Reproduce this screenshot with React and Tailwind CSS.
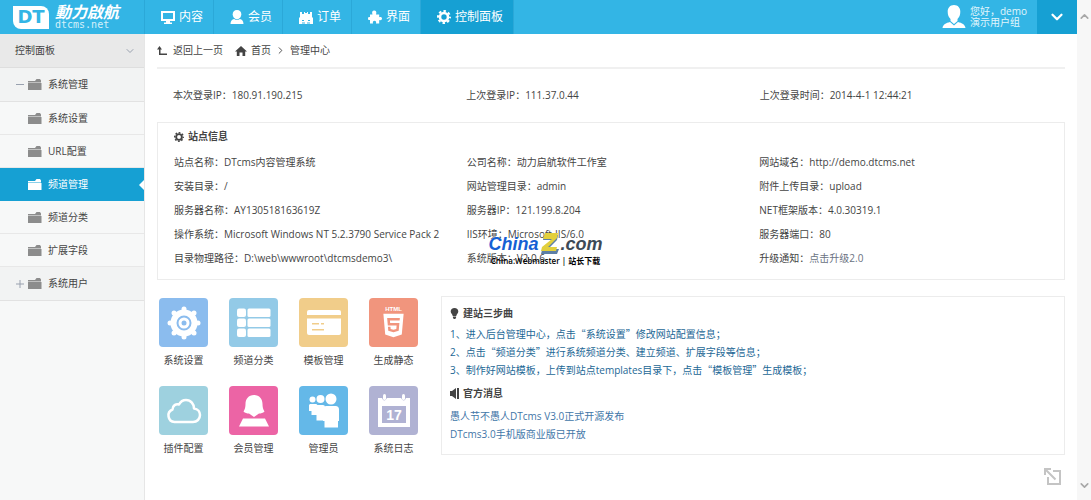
import React, { useState } from "react";
import { ChevronDown, ChevronUp, ChevronRight } from "lucide-react";
import { FaHtml5 } from "react-icons/fa";

const MonitorIcon = () => (
  <svg width="14" height="13" viewBox="0 0 14 13" fill="currentColor">
    <path fillRule="evenodd" d="M0 0h14v10H0zM2 2v6h10V2z" />
    <path d="M5 10h4v1.500h2V13H3v-1.500h2z" />
  </svg>
);

const UserIcon = () => (
  <svg width="14" height="14" viewBox="0 0 14 14" fill="currentColor">
    <path d="M7 0c2.800 0 4.300 1.700 4.300 4.200 0 2.500-1.800 5-4.300 5s-4.300-2.500-4.300-5C2.700 1.700 4.200 0 7 0z" />
    <path d="M.5 14c0-3 1.500-4.500 3.600-5 1.700 1.300 4 1.300 5.800 0 2.100.5 3.600 2 3.600 5z" />
  </svg>
);

const OrderIcon = () => (
  <svg width="14" height="13" viewBox="0 0 14 13" fill="currentColor">
    <path
      fillRule="evenodd"
      d="M1 1h2v2h2V1h1v1h2V1h1v2h2V1h2v5l1 1v6H0V7l1-1zM3 9v1h2V9zm6 0v1h2V9zM3 11.500v1h3v-1zm5 0v1h3v-1z"
    />
  </svg>
);

const PuzzleIcon = () => (
  <svg width="14" height="14" viewBox="0 0 14 14" fill="currentColor">
    <path d="M4.500 4.500C3.500 2 4.500.5 6.200.5S9 2 8 4.500h3.200v2.700c1.500-.8 2.800 0 2.800 1.300s-1.300 2.300-2.800 1.400V13.500H8c.5-2-.2-2.800-1.500-2.800S4.500 11.500 5 13.500H2V9.900C.8 10.500 0 9.700 0 8.500s.8-2 2-1.300V4.500z" />
  </svg>
);

const GearIcon = ({ size }) => (
  <svg width={size} height={size} viewBox="0 0 14 14" fill="none" stroke="currentColor">
    <circle cx="7" cy="7" r="4" strokeWidth="2.600" />
    <circle cx="7" cy="7" r="6" strokeWidth="2" strokeDasharray="2.500 2.212" strokeDashoffset="1.250" />
  </svg>
);

const HomeIcon = () => (
  <svg width="12" height="10" viewBox="0 0 12 10" fill="currentColor">
    <path d="M6 0l6 5.500h-1.800V10H7.500V6.500h-3V10H1.800V5.500H0z" />
  </svg>
);

const Folder = () => (
  <svg width="14" height="11" viewBox="0 0 14 11" fill="currentColor">
    <path d="M0 2h7l1.500-2H12l1 1.500V3H0zM0 4h13.500v7H0z" />
    <path d="M0 2.500h13V9H0z" opacity=".5" />
  </svg>
);

const Avatar = () => (
  <svg width="24" height="24" viewBox="0 0 24 24" fill="white">
    <path d="M12 0c4 0 6.300 2.800 6.300 6.800 0 3-1 5.600-2.800 7.200v2L12 19l-3.500-3v-2C6.700 12.400 5.700 9.800 5.700 6.800 5.700 2.800 8 0 12 0z" />
    <path d="M8 17l4 3.500L16 17c4 1 7 2.500 7.500 6H.5C1 19.500 4 18 8 17z" />
  </svg>
);

const BackIcon = () => (
  <svg width="10" height="10" viewBox="0 0 10 10" fill="currentColor">
    <path d="M2.500 0L5 3.500H3.500V7.500H10V9H2V3.500H0z" />
  </svg>
);

const BulbIcon = () => (
  <svg width="9" height="11" viewBox="0 0 8 11" fill="currentColor">
    <path d="M4 0c2.300 0 3.800 1.500 3.800 3.500C7.800 5.200 6 6 5.800 8H2.200C2 6 .2 5.200.2 3.500.2 1.500 1.700 0 4 0zM2.400 8.600h3.200v1L4.800 11H3.200l-.8-1.400z" />
  </svg>
);

const SpeakerIcon = () => (
  <svg width="9" height="11" viewBox="0 0 9 11" fill="currentColor">
    <path d="M0 3h2l4-3v11L2 8H0zM7 0h2v11H7z" />
  </svg>
);

const GearTile = () => (
  <svg width="34" height="34" viewBox="0 0 34 34" fill="white">
    <circle cx="17" cy="17" r="13.500" />
    <circle cx="17" cy="3" r="2.500" />
    <circle cx="17" cy="31" r="2.500" />
    <circle cx="3" cy="17" r="2.500" />
    <circle cx="31" cy="17" r="2.500" />
    <circle cx="7" cy="7" r="2.500" />
    <circle cx="27" cy="7" r="2.500" />
    <circle cx="7" cy="27" r="2.500" />
    <circle cx="27" cy="27" r="2.500" />
    <circle cx="17" cy="17" r="6.500" fill="none" stroke="#8bbcee" strokeWidth="2" />
    <circle cx="17" cy="17" r="2.500" fill="#8bbcee" />
  </svg>
);

const ListTile = () => (
  <svg width="34" height="30" viewBox="0 0 34 30" fill="white">
    {[0, 10, 20].map((y) => (
      <g key={y}>
        <rect x="0" y={y + 0.5} width="9" height="8.500" rx="2" />
        <rect x="10.500" y={y + 0.5} width="23" height="8.500" rx="1.500" />
      </g>
    ))}
  </svg>
);

const TemplateTile = () => (
  <svg width="34" height="26" viewBox="0 0 34 26" fill="white">
    <path d="M2 0h30q2 0 2 2v3H0V2q0-2 2-2z" />
    <path
      fillRule="evenodd"
      d="M0 8.500h34V23q0 2-2 2H2q-2 0-2-2zM5 13v1.500h7V13zm9 0v1.500h3V13zm-9 6v1.500h12V19z"
    />
  </svg>
);

const HtmlTile = () => (
  <div className="flex flex-col items-center text-white">
    <span className="font-['Liberation_Sans'] text-[6px] leading-[6px] font-bold">HTML</span>
    <FaHtml5 size={27} />
  </div>
);

const CloudTile = () => (
  <svg width="36" height="26" viewBox="0 0 36 26" fill="none" stroke="white" strokeWidth="2.500" strokeLinejoin="round">
    <path d="M8.500 24a6.500 6.500 0 01-2-12.500c0-4 3.500-6 6.500-5C14.500 3.500 17 2 20 2c5 0 8 4 8 8.500 4 .5 6 3.500 6 6.500 0 4-3 7-7 7z" />
  </svg>
);

const MemberTile = () => (
  <svg width="32" height="32" viewBox="0 0 32 32" fill="white">
    <path d="M16 0c5.500 0 8.500 4 8.500 9 0 3 .5 5 2 7.500-1.500 1.500-3.500 2-5.500 2L16 22l-5-3.500c-2 0-4-.5-5.500-2 1.500-2.500 2-4.500 2-7.500 0-5 3-9 8.500-9z" />
    <path d="M5 23.500h22l4 8H1z" />
  </svg>
);

const AdminTile = () => (
  <svg width="30" height="36" viewBox="0 0 30 36" fill="white">
    <circle cx="3.500" cy="6.500" r="3" />
    <circle cx="11.500" cy="6" r="4" />
    <circle cx="22" cy="6" r="5.500" />
    <path d="M1 11h6q1.500 0 1.500 2v9H2.500v-4H0v-6z" />
    <path d="M8 12h6q2 0 2 2v13.500H7.500V22H6v-8q0-2 2-2z" />
    <path d="M17.500 13h9q3.500 0 3.500 3.500V28h-1v6.500H15.500V28H14V16.500q0-3.500 3.500-3.500z" />
  </svg>
);

const CalendarTile = () => (
  <svg width="34" height="34" viewBox="0 0 34 34" fill="white">
    <path fillRule="evenodd" d="M1 4h4q2 5 5 0h14q3 5 5 0h4v29H1zM5 12v17h24V12z" />
    <rect x="6" y="0" width="3" height="6" rx="1.500" />
    <rect x="25" y="0" width="3" height="6" rx="1.500" />
    <text x="17" y="26" textAnchor="middle" fontFamily="Liberation Sans" fontWeight="700" fontSize="14">
      17
    </text>
  </svg>
);

const navItems = [
  { label: "内容", icon: <MonitorIcon /> },
  { label: "会员", icon: <UserIcon /> },
  { label: "订单", icon: <OrderIcon /> },
  { label: "界面", icon: <PuzzleIcon /> },
  { label: "控制面板", icon: <GearIcon size={14} /> },
];

const subMenu = ["系统设置", "URL配置", "频道管理", "频道分类", "扩展字段"];

const siteInfo = [
  ["站点名称：DTcms内容管理系统", "公司名称：动力启航软件工作室", "网站域名：http://demo.dtcms.net"],
  ["安装目录：/", "网站管理目录：admin", "附件上传目录：upload"],
  ["服务器名称：AY130518163619Z", "服务器IP：121.199.8.204", "NET框架版本：4.0.30319.1"],
  ["操作系统：Microsoft Windows NT 5.2.3790 Service Pack 2", "IIS环境：Microsoft-IIS/6.0", "服务器端口：80"],
  ["目录物理路径：D:\\web\\wwwroot\\dtcmsdemo3\\", "系统版本：V2.0.6"],
];

const shortcuts = [
  { label: "系统设置", bg: "bg-[#8bbcee]", icon: <GearTile /> },
  { label: "频道分类", bg: "bg-[#93cae7]", icon: <ListTile /> },
  { label: "模板管理", bg: "bg-[#f1cd8a]", icon: <TemplateTile /> },
  { label: "生成静态", bg: "bg-[#f1957d]", icon: <HtmlTile /> },
  { label: "插件配置", bg: "bg-[#9ed1df]", icon: <CloudTile /> },
  { label: "会员管理", bg: "bg-[#ec64a5]", icon: <MemberTile /> },
  { label: "管理员", bg: "bg-[#64b8e8]", icon: <AdminTile /> },
  { label: "系统日志", bg: "bg-[#b0b2d3]", icon: <CalendarTile /> },
];

// Full-width Chinese quotation marks
const Quoted = ({ children }) => (
  <>
    <span className="font-['Noto_Sans_CJK_SC']">“</span>
    {children}
    <span className="font-['Noto_Sans_CJK_SC']">”</span>
  </>
);

function Header({ active, onSelect }) {
  return (
    <header className="flex h-[34px] bg-[#33b5e5] text-white">
      <a href="#home" className="flex w-[145px] shrink-0 items-center gap-1.5 border-r border-[#2ba8d8] pl-[13px]">
        <span className="flex h-[23px] w-9 items-center justify-center rounded-tr-lg rounded-bl-lg bg-white font-['DejaVu_Sans'] text-lg leading-none font-bold text-[#33b5e5]">
          DT
        </span>
        <span className="flex flex-col whitespace-nowrap">
          <span className="text-base leading-4 font-bold italic">動力啟航</span>
          <span className="font-['DejaVu_Sans_Mono'] text-[10px] leading-[10px] text-[#d5f0fa]">dtcms.net</span>
        </span>
      </a>
      <nav className="flex">
        {navItems.map((item) => (
          <button
            key={item.label}
            type="button"
            onClick={() => onSelect(item.label)}
            className={`flex items-center gap-1 border-r border-[#2ba8d8] pr-2.5 pl-4 text-xs ${
              active === item.label ? "bg-[#16a0d3]" : ""
            }`}
          >
            {item.icon}
            {item.label}
          </button>
        ))}
      </nav>
      <div className="ml-auto flex items-center gap-1 pr-2.5">
        <Avatar />
        <p className="leading-[11px] text-[#e2f5fc]">
          您好，demo
          <br />
          演示用户组
        </p>
      </div>
      <button type="button" aria-label="更多" className="flex w-10 items-center justify-center bg-[#16a0d3]">
        <ChevronDown size={18} strokeWidth={3} />
      </button>
    </header>
  );
}

function Sidebar({ current, onSelect }) {
  return (
    <aside className="w-[145px] shrink-0 border-r border-[#e6e6e6] bg-[#f7f8f8]">
      <button
        type="button"
        className="flex h-[34px] w-full items-center justify-between border-b border-[#dedede] bg-[#e9e9e9] pr-2 pl-[15px]"
      >
        控制面板
        <ChevronDown size={12} className="text-gray-400" />
      </button>
      <button type="button" className="flex h-[34px] w-full items-center border-b border-[#e2e2e2] bg-[#f2f3f3] pl-4">
        <span className="mr-1 h-px w-2 bg-gray-400" />
        <span className="mr-1.5 text-[#8c8c8c]">
          <Folder />
        </span>
        系统管理
      </button>
      <ul>
        {subMenu.map((label) => {
          const selected = label === current;
          return (
            <li key={label}>
              <a
                href="#menu"
                onClick={() => onSelect(label)}
                className={`relative flex h-[33px] items-center gap-1.5 border-b pl-7 ${
                  selected ? "border-[#16a0d3] bg-[#16a0d3] text-white" : "border-[#e8e8e8]"
                }`}
              >
                <span className={selected ? "text-white" : "text-[#8c8c8c]"}>
                  <Folder />
                </span>
                {label}
                {selected && (
                  <svg className="absolute top-3 right-0" width="5" height="10" viewBox="0 0 5 10" fill="white">
                    <path d="M5 0v10L0 5z" />
                  </svg>
                )}
              </a>
            </li>
          );
        })}
      </ul>
      <button type="button" className="flex h-[34px] w-full items-center border-b border-[#e2e2e2] bg-[#f2f3f3] pl-4">
        <svg className="mr-1 text-gray-400" width="8" height="8" viewBox="0 0 8 8" fill="currentColor">
          <path d="M0 3.500h8v1H0zM3.500 0h1v8h-1z" />
        </svg>
        <span className="mr-1.5 text-[#8c8c8c]">
          <Folder />
        </span>
        系统用户
      </button>
    </aside>
  );
}

function SiteInfo() {
  return (
    <section className="border border-[#ececec] pt-0.5 pr-3 pb-[9px] pl-4">
      <h2 className="mb-0.5 flex h-[23px] items-center gap-1 font-bold">
        <GearIcon size={10} />
        站点信息
      </h2>
      <div className="grid grid-cols-3 leading-6">
        {siteInfo.flat().map((text) => (
          <p key={text} className="whitespace-nowrap">
            {text}
          </p>
        ))}
        <p>
          升级通知：
          <a href="#upgrade" className="text-gray-500">
            点击升级2.0
          </a>
        </p>
      </div>
    </section>
  );
}

function Guide() {
  return (
    <section className="flex-1 self-start border border-[#ececec] px-2 pt-1 pb-[11px]">
      <h2 className="flex h-6 items-center gap-1 font-bold">
        <BulbIcon />
        建站三步曲
      </h2>
      <ol className="leading-[18px] text-[#1c6795]">
        <li>
          1、进入后台管理中心，点击<Quoted>系统设置</Quoted>修改网站配置信息；
        </li>
        <li>
          2、点击<Quoted>频道分类</Quoted>进行系统频道分类、建立频道、扩展字段等信息；
        </li>
        <li>
          3、制作好网站模板，上传到站点templates目录下，点击<Quoted>模板管理</Quoted>生成模板；
        </li>
      </ol>
      <h2 className="flex h-7 items-center gap-1 font-bold">
        <SpeakerIcon />
        官方消息
      </h2>
      <ul className="leading-[18px] text-[#3f76a8]">
        <li>
          <a href="#news-1">愚人节不愚人DTcms V3.0正式开源发布</a>
        </li>
        <li>
          <a href="#news-2">DTcms3.0手机版商业版已开放</a>
        </li>
      </ul>
    </section>
  );
}

function Watermark() {
  return (
    <div className="pointer-events-none absolute inset-0 flex flex-col items-center justify-center">
      <div className="flex items-center font-['Liberation_Sans'] text-lg leading-5 font-bold italic">
        <span className="text-[#1560d4]">China</span>
        <svg width="22" height="22" viewBox="0 0 22 22">
          <path d="M5 2h14l-1 5-9 9h11l-2 5H2l1-4L13 7H4z" fill="#5d7fa6" />
          <path d="M6 0h13l-1 5-9 9h9l-1 4H2l1-4 10-8H4z" fill="#e2cf3c" />
        </svg>
        <span className="text-[#3d4a57]">.com</span>
      </div>
      <p className="text-[8px] leading-3 font-semibold text-black">China:Webmaster | 站长下载</p>
    </div>
  );
}

function App() {
  const [activeNav, setActiveNav] = useState("控制面板");
  const [activeMenu, setActiveMenu] = useState("频道管理");

  return (
    <div className="relative flex min-h-screen bg-white font-['Open_Sans','Noto_Sans_CJK_SC',sans-serif] text-[10px] text-[#444]">
      <div className="flex min-w-0 flex-1 flex-col">
        <Header active={activeNav} onSelect={setActiveNav} />
        <div className="flex flex-1">
          <Sidebar current={activeMenu} onSelect={setActiveMenu} />
          <main className="min-w-0 flex-1 px-3">
            {/* Breadcrumb */}
            <nav className="flex h-[35px] items-center border-b-2 border-[#f0f0f0]">
              <a href="#back" className="flex items-center gap-1.5">
                <BackIcon />
                返回上一页
              </a>
              <a href="#index" className="ml-3 flex items-center gap-1">
                <HomeIcon />
                首页
              </a>
              <ChevronRight size={11} className="mx-1" />
              <span>管理中心</span>
            </nav>

            {/* Login info */}
            <div className="grid h-[53px] grid-cols-3 items-center pr-3 pl-4">
              <p>本次登录IP：180.91.190.215</p>
              <p>上次登录IP：111.37.0.44</p>
              <p>上次登录时间：2014-4-1 12:44:21</p>
            </div>

            <SiteInfo />

            <div className="mt-4 flex">
              <div className="grid w-[284px] shrink-0 grid-cols-[repeat(4,49px)] content-start gap-x-[21px] gap-y-3 pt-0.5 pl-0.5">
                {shortcuts.map((item) => (
                  <a key={item.label} href="#shortcut" className="flex flex-col items-center">
                    <span className={`flex h-[49px] w-full items-center justify-center rounded-sm ${item.bg}`}>
                      {item.icon}
                    </span>
                    <span className="leading-[27px]">{item.label}</span>
                  </a>
                ))}
              </div>
              <Guide />
            </div>

            <div className="flex justify-end pt-1.5 pr-1">
              <button type="button" aria-label="展开">
                <svg width="17" height="17" viewBox="0 0 17 17" fill="none" stroke="#c4c4c4" strokeWidth="2">
                  <path d="M9 3h7v13H4V9M1.500 1.500l10 10M1 7V1h6" />
                </svg>
              </button>
            </div>
          </main>
        </div>
      </div>

      <div className="flex w-3.5 shrink-0 flex-col items-center justify-between bg-[#f7f7f7] pt-2.5 pb-2 text-[#a8a8a8]">
        <ChevronUp size={13} strokeWidth={3} />
        <ChevronDown size={13} strokeWidth={3} />
      </div>

      <Watermark />
    </div>
  );
}

export default App;
